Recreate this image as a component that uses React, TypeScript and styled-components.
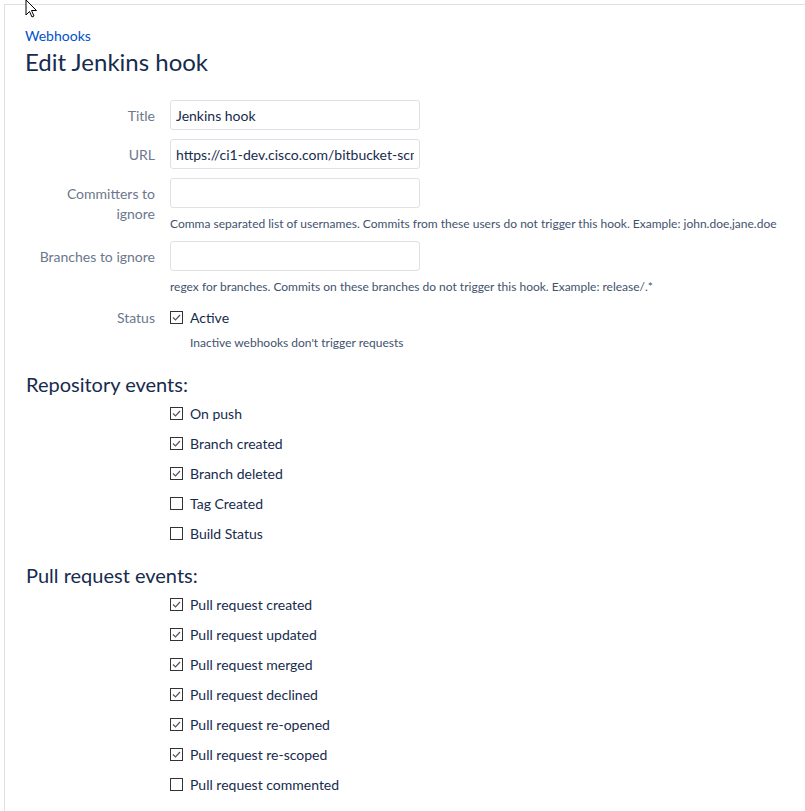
import styled, { createGlobalStyle } from 'styled-components';

const GlobalStyle = createGlobalStyle`
  html, body {
    margin: 0;
    padding: 0;
    background: #ffffff;
  }
  body {
    font-family: 'Segoe UI', Lato, 'Noto Sans', sans-serif;
    color: #172b4d;
  }
`;

const Page = styled.div`
  position: relative;
  margin: 4px 0 0 4px;
  border-top: 1px solid #dfe1e6;
  border-left: 1px solid #dfe1e6;
  min-height: 807px;
  padding: 21px 0 0 20px;
  box-sizing: border-box;
`;

const Cursor = styled.svg`
  position: absolute;
  left: 20px;
  top: -6px;
`;

const Crumb = styled.a`
  display: block;
  font-size: 14px;
  line-height: 20px;
  color: #0052cc;
  text-decoration: none;
`;

const Heading = styled.h1`
  margin: 0 0 22px;
  font-size: 24px;
  font-weight: 400;
  line-height: 32px;
  color: #172b4d;
`;

const FieldRow = styled.div`
  display: grid;
  grid-template-columns: 120px 1fr;
  column-gap: 15px;
  margin-left: 10px;
  margin-bottom: 9px;
`;

const Label = styled.label<{ pad?: number }>`
  text-align: right;
  font-size: 14px;
  line-height: 20px;
  padding-top: ${(p) => p.pad ?? 6}px;
  color: #6b778c;
`;

const Field = styled.div`
  display: flex;
  flex-direction: column;
`;

const TextInput = styled.input`
  box-sizing: border-box;
  width: 250px;
  height: 30px;
  border: 1px solid #dfe1e6;
  border-radius: 3px;
  padding: 0 5px;
  font-family: inherit;
  font-size: 14px;
  color: #172b4d;
  background: #fff;
  outline: none;
`;

const Help = styled.div<{ indent?: boolean }>`
  font-size: 12px;
  line-height: 16px;
  margin-top: 8px;
  padding-left: ${(p) => (p.indent ? 20 : 0)}px;
  color: #42526e;
  white-space: nowrap;
`;

const Section = styled.h2`
  margin: 0;
  padding-left: 1px;
  font-size: 20px;
  font-weight: 400;
  line-height: 28px;
  color: #172b4d;
`;

const CheckList = styled.div`
  display: flex;
  flex-direction: column;
  padding-left: 145px;
  margin-bottom: 13px;
`;

const CheckRow = styled.label<{ tall?: boolean }>`
  display: flex;
  align-items: center;
  gap: 7px;
  height: ${(p) => (p.tall ? 20 : 30)}px;
  font-size: 14px;
  color: #172b4d;
`;

const Box = styled.span`
  box-sizing: border-box;
  width: 13px;
  height: 13px;
  border: 1px solid #333333;
  background: #fff;
  display: flex;
  align-items: center;
  justify-content: center;
  flex-shrink: 0;
`;

const StatusBlock = styled.div`
  padding-top: 3px;
  margin-bottom: 10px;
`;

function Check({ checked, label, tall }: { checked: boolean; label: string; tall?: boolean }) {
  return (
    <CheckRow tall={tall}>
      <Box>
        {checked && (
          <svg width="11" height="11" viewBox="0 0 11 11">
            <path d="M2 5.5 L4.5 8 L9 3" fill="none" stroke="#555" strokeWidth="1.2" />
          </svg>
        )}
      </Box>
      {label}
    </CheckRow>
  );
}

const repoEvents = [
  { label: 'On push', checked: true },
  { label: 'Branch created', checked: true },
  { label: 'Branch deleted', checked: true },
  { label: 'Tag Created', checked: false },
  { label: 'Build Status', checked: false },
];

const prEvents = [
  { label: 'Pull request created', checked: true },
  { label: 'Pull request updated', checked: true },
  { label: 'Pull request merged', checked: true },
  { label: 'Pull request declined', checked: true },
  { label: 'Pull request re-opened', checked: true },
  { label: 'Pull request re-scoped', checked: true },
  { label: 'Pull request commented', checked: false },
];

export default function App() {
  return (
    <>
      <GlobalStyle />
      <Page>
        <Cursor width="14" height="20" viewBox="0 0 14 20">
          <path d="M1 1 L1 16 L4.5 12.5 L7 18 L9 17 L6.5 11.5 L11.5 11.5 Z" fill="#fff" stroke="#000" strokeWidth="1" />
        </Cursor>
        <Crumb href="#">Webhooks</Crumb>
        <Heading>Edit Jenkins hook</Heading>

        <FieldRow>
          <Label>Title</Label>
          <Field>
            <TextInput defaultValue="Jenkins hook" />
          </Field>
        </FieldRow>
        <FieldRow>
          <Label>URL</Label>
          <Field>
            <TextInput defaultValue="https://ci1-dev.cisco.com/bitbucket-scm" />
          </Field>
        </FieldRow>
        <FieldRow>
          <Label>Committers to ignore</Label>
          <Field>
            <TextInput />
            <Help>
              Comma separated list of usernames. Commits from these users do not trigger this hook. Example:
              john.doe,jane.doe
            </Help>
          </Field>
        </FieldRow>
        <FieldRow>
          <Label>Branches to ignore</Label>
          <Field>
            <TextInput />
            <Help>regex for branches. Commits on these branches do not trigger this hook. Example: release/.*</Help>
          </Field>
        </FieldRow>
        <FieldRow>
          <Label pad={4}>Status</Label>
          <StatusBlock>
            <Check checked label="Active" tall />
            <Help indent>Inactive webhooks don't trigger requests</Help>
          </StatusBlock>
        </FieldRow>

        <Section>Repository events:</Section>
        <CheckList>
          {repoEvents.map((e) => (
            <Check key={e.label} checked={e.checked} label={e.label} />
          ))}
        </CheckList>

        <Section>Pull request events:</Section>
        <CheckList>
          {prEvents.map((e) => (
            <Check key={e.label} checked={e.checked} label={e.label} />
          ))}
        </CheckList>
      </Page>
    </>
  );
}
